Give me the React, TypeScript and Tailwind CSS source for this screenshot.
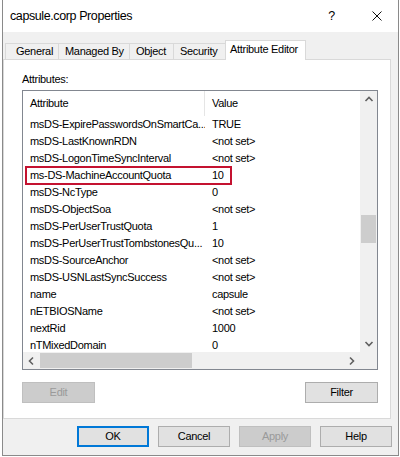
import React from "react";

const rows: [string, string][] = [
  ["msDS-ExpirePasswordsOnSmartCa...", "TRUE"],
  ["msDS-LastKnownRDN", "<not set>"],
  ["msDS-LogonTimeSyncInterval", "<not set>"],
  ["ms-DS-MachineAccountQuota", "10"],
  ["msDS-NcType", "0"],
  ["msDS-ObjectSoa", "<not set>"],
  ["msDS-PerUserTrustQuota", "1"],
  ["msDS-PerUserTrustTombstonesQu...", "10"],
  ["msDS-SourceAnchor", "<not set>"],
  ["msDS-USNLastSyncSuccess", "<not set>"],
  ["name", "capsule"],
  ["nETBIOSName", "<not set>"],
  ["nextRid", "1000"],
  ["nTMixedDomain", "0"],
];

function Chevron({ dir }: { dir: "up" | "down" | "left" | "right" }) {
  const d =
    dir === "up"
      ? "M1.5 6 L5 2.5 L8.5 6"
      : dir === "down"
      ? "M1.5 3 L5 6.5 L8.5 3"
      : dir === "left"
      ? "M6 1.5 L2.5 5 L6 8.5"
      : "M3 1.5 L6.5 5 L3 8.5";
  return (
    <svg width="10" height="10" viewBox="0 0 10 10">
      <path d={d} fill="none" stroke="#606060" strokeWidth="1.6" />
    </svg>
  );
}

function Btn({
  label,
  disabled,
  isDefault,
  w = "w-[73px]",
}: {
  label: string;
  disabled?: boolean;
  isDefault?: boolean;
  w?: string;
}) {
  let cls = "bg-[#e1e1e1] border border-[#adadad] text-black";
  if (disabled) cls = "bg-[#cccccc] border border-[#bfbfbf] text-[#9a9a9a]";
  if (isDefault) cls = "bg-[#e1e1e1] border-2 border-[#0078d7] text-black";
  return (
    <div className={`${w} h-[21px] flex items-center justify-center ${cls}`}>
      {label}
    </div>
  );
}

export default function App() {
  return (
    <div className="w-[400px] h-[457px] bg-white overflow-hidden font-['Liberation_Sans',Arial,sans-serif] text-[11px] tracking-[-0.3px] text-black">
      <div className="ml-[2px] w-[397px] h-[456px] border-l border-r border-b border-[#8a8a8a] bg-[#f0f0f0] flex flex-col">
        {/* Title bar */}
        <div className="h-[32px] bg-white flex items-center pl-[7px] pr-[16px]">
          <span className="text-[12.5px] tracking-[-0.4px]">capsule.corp Properties</span>
          <div className="flex-1" />
          <span className="text-[12.5px] mr-[37px]">?</span>
          <svg width="10" height="10" viewBox="0 0 10 10">
            <path d="M0.5 0.5 L9.5 9.5 M9.5 0.5 L0.5 9.5" stroke="#111" strokeWidth="1" />
          </svg>
        </div>

        {/* Tabs */}
        <div className="h-[27px] flex items-end pl-[2px] relative z-10">
          <div className="w-[53px] h-[16px] pl-[10px] flex items-center border-t border-l border-[#d9d9d9] bg-[#f0f0f0]">General</div>
          <div className="w-[71px] h-[16px] pl-[6px] flex items-center border-t border-l border-[#d9d9d9] bg-[#f0f0f0]">Managed By</div>
          <div className="w-[44px] h-[16px] pl-[6px] flex items-center border-t border-l border-[#d9d9d9] bg-[#f0f0f0]">Object</div>
          <div className="w-[52px] h-[16px] pl-[6px] flex items-center border-t border-l border-[#d9d9d9] bg-[#f0f0f0]">Security</div>
          <div className="w-[81px] h-[20px] -mb-[1px] pl-[4px] pb-[2px] flex items-center border-t border-l border-r border-[#d9d9d9] bg-white">Attribute Editor</div>
        </div>

        {/* Panel */}
        <div className="w-[388px] h-[360px] border border-[#d9d9d9] bg-white pt-[12px] pl-[18px] flex flex-col">
          <div className="h-[14px] leading-[14px] mb-[4px]">Attributes:</div>

          {/* List view */}
          <div className="w-[356px] h-[280px] border border-[#828790] flex flex-col">
            <div className="h-[261px] flex">
              <div className="w-[337px] flex flex-col">
                <div className="h-[25px] flex items-center shrink-0">
                  <div className="w-[182px] h-full pl-[7px] flex items-center border-r border-[#e5e5e5]">Attribute</div>
                  <div className="pl-[7px]">Value</div>
                </div>
                <div className="flex-1 overflow-hidden relative">
                  {rows.map(([a, v]) => (
                    <div key={a} className="h-[17px] flex items-center whitespace-nowrap">
                      <div className="w-[182px] pl-[7px] overflow-hidden">{a}</div>
                      <div className="pl-[7px]">{v}</div>
                    </div>
                  ))}
                  <div className="absolute left-[2px] top-[50px] w-[207px] h-[19px] border-2 border-[#c41230]" />
                </div>
              </div>
              {/* vertical scrollbar */}
              <div className="w-[17px] bg-[#f0f0f0] flex flex-col">
                <div className="h-[17px] flex items-center justify-center"><Chevron dir="up" /></div>
                <div className="h-[107px]" />
                <div className="h-[28px] mx-[1px] bg-[#cdcdcd]" />
                <div className="flex-1" />
                <div className="h-[17px] flex items-center justify-center"><Chevron dir="down" /></div>
              </div>
            </div>
            {/* horizontal scrollbar */}
            <div className="h-[17px] flex">
              <div className="w-[337px] bg-[#f0f0f0] flex items-center">
                <div className="w-[17px] h-[17px] flex items-center justify-center"><Chevron dir="left" /></div>
                <div className="w-[152px] h-[15px] bg-[#cdcdcd]" />
                <div className="flex-1" />
                <div className="w-[17px] h-[17px] flex items-center justify-center"><Chevron dir="right" /></div>
              </div>
              <div className="w-[17px] bg-[#f0f0f0]" />
            </div>
          </div>

          <div className="mt-[12px] w-[356px] flex justify-between">
            <Btn label="Edit" disabled />
            <Btn label="Filter" />
          </div>
        </div>

        {/* Bottom buttons */}
        <div className="mt-[7px] pl-[74px] flex gap-[9px]">
          <Btn label="OK" isDefault w="w-[72px]" />
          <Btn label="Cancel" w="w-[72px]" />
          <Btn label="Apply" disabled w="w-[72px]" />
          <Btn label="Help" w="w-[72px]" />
        </div>
      </div>
    </div>
  );
}
